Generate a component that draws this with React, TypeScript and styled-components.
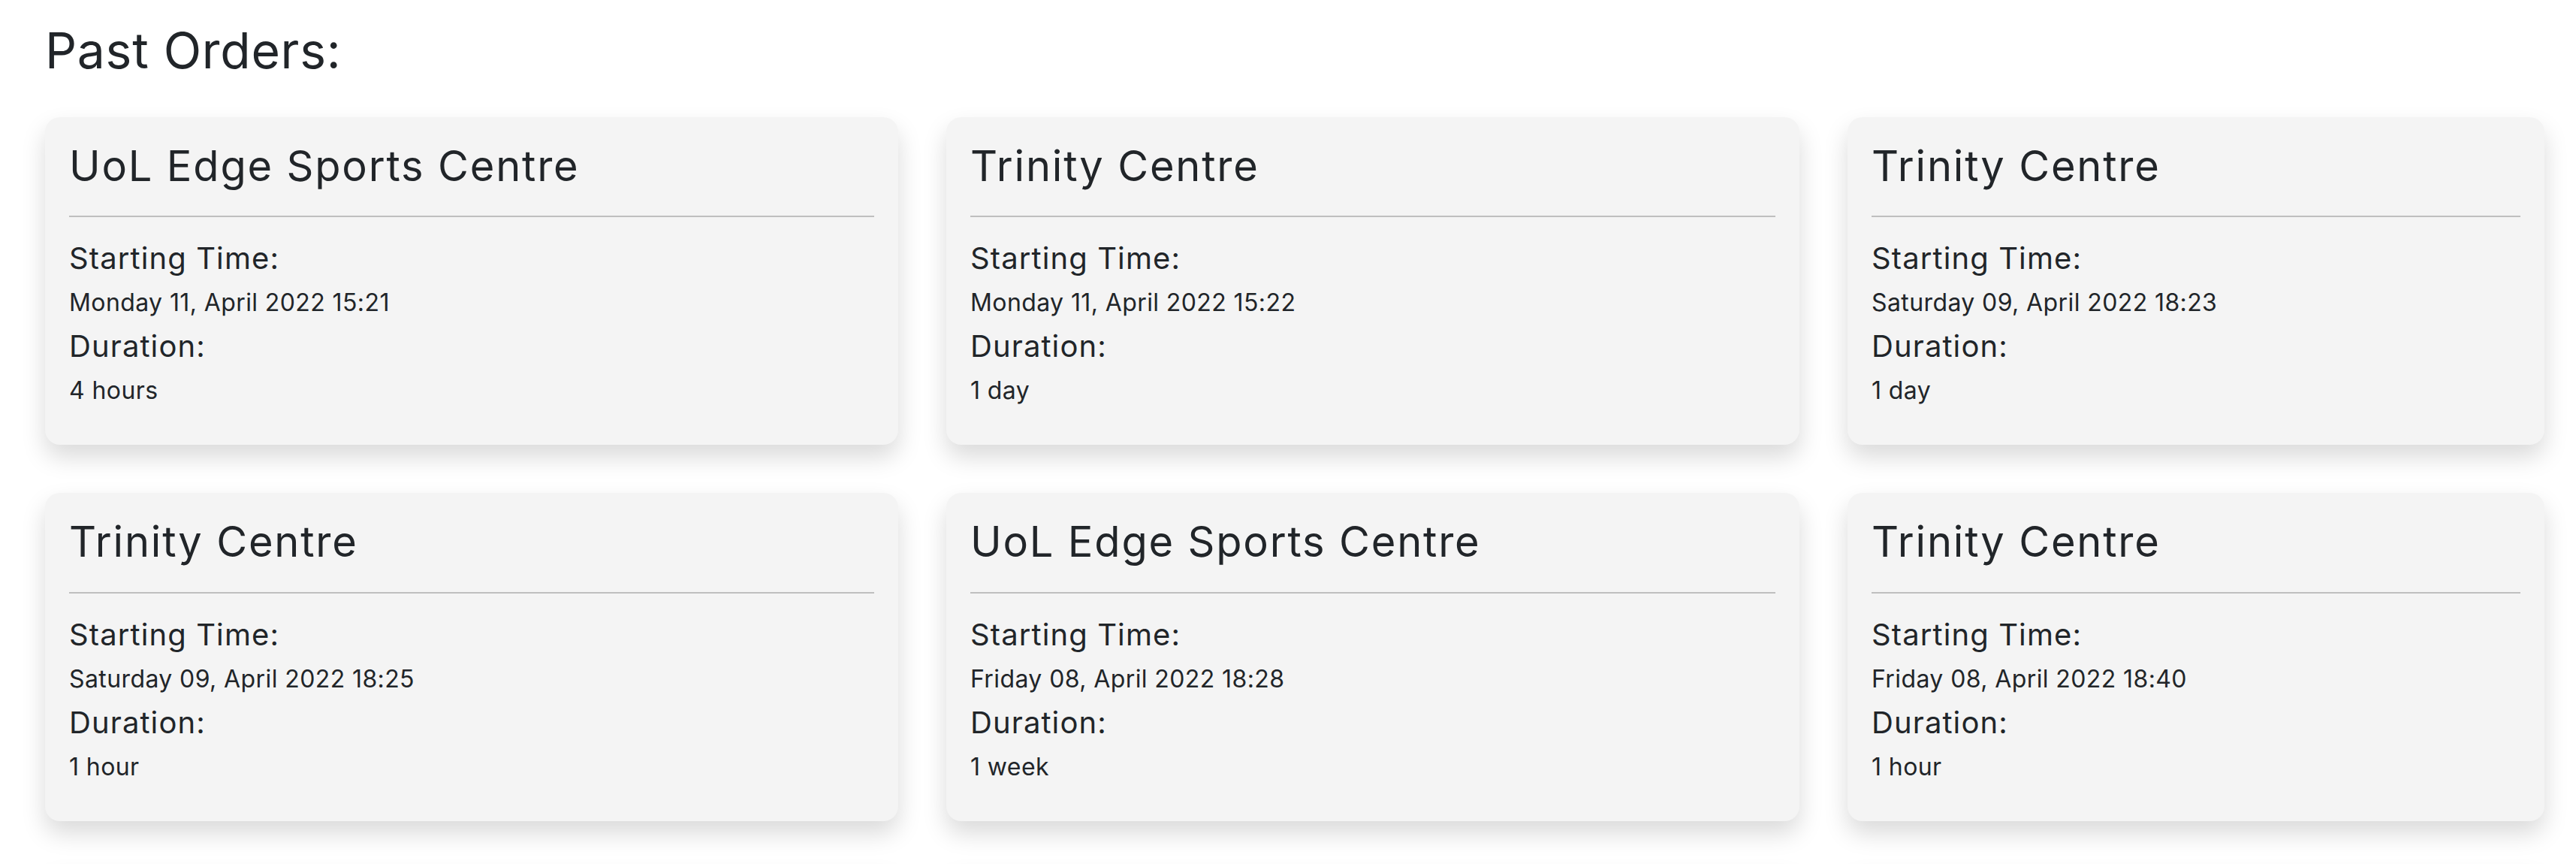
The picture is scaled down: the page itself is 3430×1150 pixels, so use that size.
import React from "react";
import styled, { createGlobalStyle } from "styled-components";

const GlobalStyle = createGlobalStyle`
  html, body {
    margin: 0;
    padding: 0;
    background: #ffffff;
  }
  body {
    font-family: Inter, "Noto Sans", Lato, sans-serif;
    color: #212529;
    -webkit-font-smoothing: antialiased;
  }
  * { box-sizing: border-box; }
`;

const Page = styled.main`
  padding: 28px 42px 0 60px;
`;

const Heading = styled.h1`
  margin: 0 0 49px 0;
  font-size: 66px;
  line-height: 1.2;
  font-weight: 400;
  letter-spacing: 0.7px;
`;

const Grid = styled.div`
  display: grid;
  grid-template-columns: 1136fr 1136fr 928fr;
  column-gap: 64px;
  row-gap: 64px;
`;

const Card = styled.article`
  background: #f4f4f4;
  border-radius: 20px;
  box-shadow: 0 16px 32px rgba(0, 0, 0, 0.15);
  padding: 32px 32px 38px 32px;
  display: flex;
  flex-direction: column;
`;

const CardTitle = styled.h3`
  margin: 0;
  font-size: 56px;
  line-height: 1.2;
  font-weight: 400;
  letter-spacing: 1.8px;
`;

const Divider = styled.hr`
  margin: 32px 0 31px 0;
  border: 0;
  height: 2px;
  background: #bfbfbf;
`;

const Label = styled.h5`
  margin: 0 0 11px 0;
  font-size: 40px;
  line-height: 48px;
  font-weight: 400;
  letter-spacing: 1.1px;
`;

const Value = styled.p`
  margin: 0 0 10px 0;
  font-size: 32px;
  line-height: 48px;
  font-weight: 400;
  letter-spacing: 0.4px;
`;

type Order = { venue: string; start: string; duration: string };

const orders: Order[] = [
  { venue: "UoL Edge Sports Centre", start: "Monday 11, April 2022 15:21", duration: "4 hours" },
  { venue: "Trinity Centre", start: "Monday 11, April 2022 15:22", duration: "1 day" },
  { venue: "Trinity Centre", start: "Saturday 09, April 2022 18:23", duration: "1 day" },
  { venue: "Trinity Centre", start: "Saturday 09, April 2022 18:25", duration: "1 hour" },
  { venue: "UoL Edge Sports Centre", start: "Friday 08, April 2022 18:28", duration: "1 week" },
  { venue: "Trinity Centre", start: "Friday 08, April 2022 18:40", duration: "1 hour" },
  { venue: "Trinity Centre", start: "Thursday 07, April 2022 12:10", duration: "1 day" },
  { venue: "UoL Edge Sports Centre", start: "Thursday 07, April 2022 09:30", duration: "2 hours" },
  { venue: "Trinity Centre", start: "Wednesday 06, April 2022 17:45", duration: "1 hour" },
];

const OrderCard: React.FC<{ order: Order }> = ({ order }) => (
  <Card>
    <CardTitle>{order.venue}</CardTitle>
    <Divider />
    <Label>Starting Time:</Label>
    <Value>{order.start}</Value>
    <Label>Duration:</Label>
    <Value>{order.duration}</Value>
  </Card>
);

export default function App() {
  return (
    <>
      <GlobalStyle />
      <Page>
        <Heading>Past Orders:</Heading>
        <Grid>
          {orders.map((o, i) => (
            <OrderCard key={i} order={o} />
          ))}
        </Grid>
      </Page>
    </>
  );
}
